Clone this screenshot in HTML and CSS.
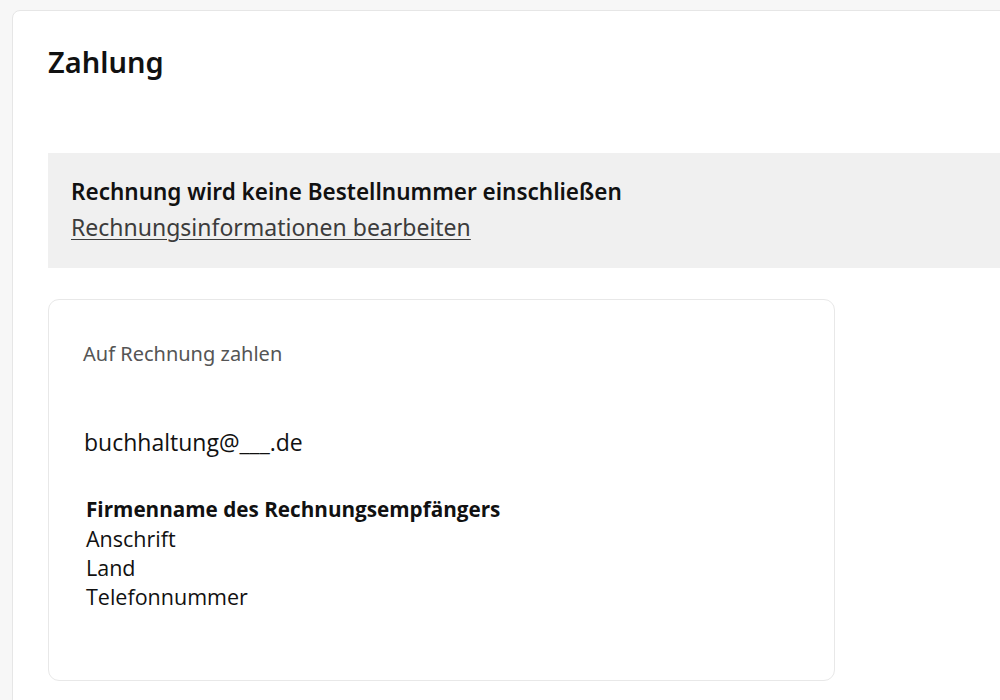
FILE: index.html
```html
<!DOCTYPE html>
<html lang="de">
<head>
<meta charset="utf-8">
<title>Zahlung</title>
<link rel="stylesheet" href="styles.css">
</head>
<body>
<div class="page">
  <section class="panel">
    <h1 class="title">Zahlung</h1>
    <div class="notice">
      <p class="notice-head">Rechnung wird keine Bestellnummer einschließen</p>
      <a class="notice-link" href="#">Rechnungsinformationen bearbeiten</a>
    </div>
    <div class="method">
      <p class="method-label">Auf Rechnung zahlen</p>
      <p class="email">buchhaltung@___.de</p>
      <div class="address">
        <p class="company">Firmenname des Rechnungsempfängers</p>
        <p>Anschrift</p>
        <p>Land</p>
        <p>Telefonnummer</p>
      </div>
    </div>
  </section>
</div>
</body>
</html>
```

FILE: styles.css
```css
html, body {
  margin: 0;
  padding: 0;
  background: #f7f7f7;
  overflow: hidden;
}
.page {
  width: 1000px;
  height: 700px;
  overflow: hidden;
  padding: 10px 0 0 12px;
  box-sizing: border-box;
}
.panel {
  width: 1100px;
  height: 760px;
  background: #ffffff;
  border: 1px solid #e6e6e6;
  border-radius: 8px;
  box-sizing: border-box;
  padding: 0 0 0 35px;
  font-family: "Noto Sans", sans-serif;
  color: #1a1a1a;
}
.title {
  margin: 0;
  padding-top: 31px;
  font-size: 29px;
  line-height: 40px;
  font-weight: 600;
  color: #111;
}
.notice {
  margin-top: 71px;
  background: #f0f0f0;
  height: 115px;
  padding: 24px 0 0 23px;
  box-sizing: border-box;
}
.notice p, .method p { margin: 0; }
.notice-head {
  font-size: 22.5px;
  line-height: 30px;
  font-weight: 600;
  color: #111;
}
.notice-link {
  display: inline-block;
  margin-top: 5px;
  font-size: 23px;
  line-height: 30px;
  color: #3c3c3c;
  text-decoration: underline;
  text-underline-offset: 3px;
  text-decoration-thickness: 1px;
}
.method {
  margin-top: 31px;
  width: 787px;
  height: 382px;
  border: 1.5px solid #e8e8e8;
  border-radius: 11px;
  box-sizing: border-box;
  padding: 41px 0 0 34px;
}
.method-label {
  font-size: 20px;
  line-height: 26px;
  color: #555;
}
.email {
  margin-top: 60px !important;
  font-family: "Open Sans", sans-serif;
  font-size: 23px;
  line-height: 30px;
  color: #111;
  padding-left: 1px;
}
.address {
  margin-top: 38px;
  padding-left: 3px;
  font-family: "Open Sans", sans-serif;
  font-size: 21.5px;
  line-height: 29px;
  color: #111;
}
.company { font-weight: 700; font-size: 20.7px; }
```
